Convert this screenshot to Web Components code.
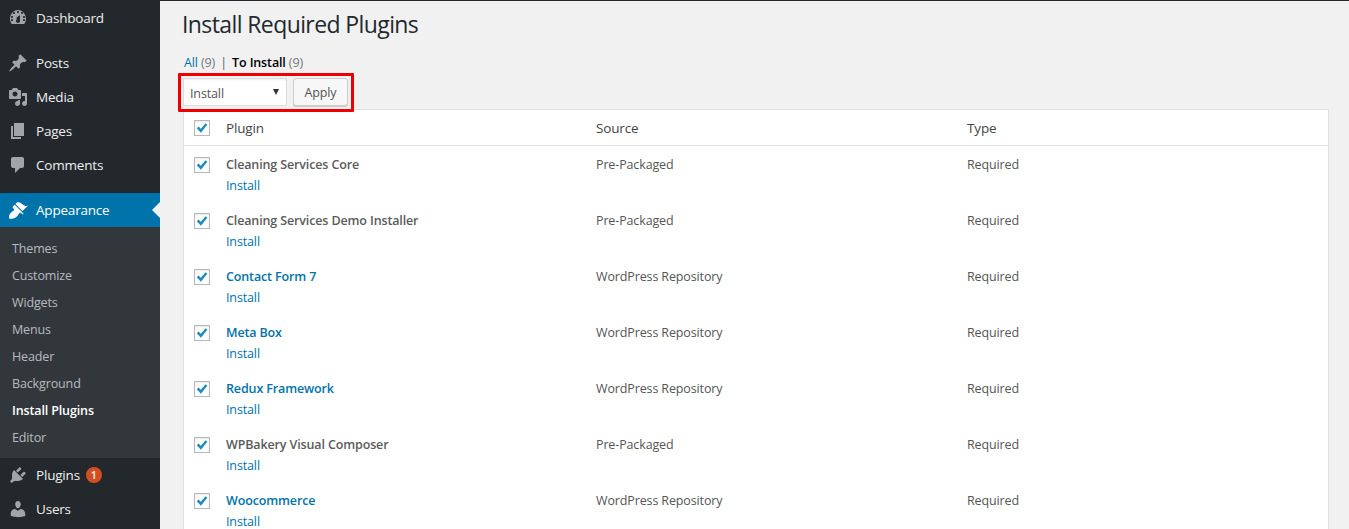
<!DOCTYPE html>
<html>
<head>
<meta charset="utf-8">
<title>Install Required Plugins</title>
<style>
    html, body { margin: 0; height: 529px; overflow: hidden; background: #f1f1f1; }
    body { font-family: "Open Sans", "Noto Sans", sans-serif; font-size: 12.5px; letter-spacing: -.13px; color: #444; }
    wp-shell { height: 529px; }
</style>
</head>
<body>
<wp-shell>
    <wp-sidebar slot="side"></wp-sidebar>
    <wp-plugins-page></wp-plugins-page>
</wp-shell>

<script>
const ICONS = {
    dashboard: '<path fill-rule="evenodd" d="M3.76 16h12.48c1.100-1.430 1.760-3.210 1.760-5.140 0-4.670-3.580-8.860-8-8.860s-8 4.190-8 8.860c0 1.930.66 3.710 1.760 5.140zM10 3c.55 0 1 .45 1 1s-.45 1-1 1-1-.45-1-1 .45-1 1-1zM6 4c.55 0 1 .45 1 1s-.45 1-1 1-1-.45-1-1 .45-1 1-1zm8 0c.55 0 1 .45 1 1s-.45 1-1 1-1-.45-1-1 .45-1 1-1zm-5.370 5.550L12 7v6c0 1.100-.9 2-2 2s-2-.9-2-2c0-.57.24-1.080.63-1.450zM4 8c.55 0 1 .45 1 1s-.45 1-1 1-1-.45-1-1 .45-1 1-1zm12 0c.55 0 1 .45 1 1s-.45 1-1 1-1-.45-1-1 .45-1 1-1zm-12 3c.55 0 1 .45 1 1s-.45 1-1 1-1-.45-1-1 .45-1 1-1zm12 0c.55 0 1 .45 1 1s-.45 1-1 1-1-.45-1-1 .45-1 1-1z"/>',
    posts: '<path d="M10.440 3.020l1.820-1.820 6.360 6.350-1.830 1.820c-1.050-.68-2.480-.57-3.410.36l-.75.75c-.92.93-1.040 2.350-.35 3.410l-1.830 1.820-2.410-2.410-2.800 2.790c-.42.42-3.380 2.710-3.800 2.290s1.860-3.390 2.280-3.810l2.790-2.790L4.100 9.360l1.830-1.820c1.050.69 2.480.57 3.400-.36l.75-.75c.93-.92 1.050-2.350.36-3.410z"/>',
    media: '<path fill-rule="evenodd" d="M13 11V4c0-.55-.45-1-1-1h-1.670L9 1H5L3.670 3H2c-.55 0-1 .45-1 1v7c0 .55.45 1 1 1h10c.55 0 1-.45 1-1zM7 4.500c1.380 0 2.500 1.120 2.500 2.500S8.380 9.500 7 9.500 4.500 8.380 4.500 7 5.620 4.500 7 4.500z"/><path d="M14 6h5v10.500c0 1.380-1.120 2.500-2.500 2.500S14 17.880 14 16.500s1.120-2.500 2.500-2.500c.17 0 .34.020.5.050V9h-3V6zm-4 8.050V13h2v3.500c0 1.380-1.120 2.500-2.500 2.500S7 17.880 7 16.500 8.120 14 9.500 14c.17 0 .34.020.5.050z"/>',
    pages: '<path d="M6 15V2h10v13H6zm-1 1h8v2H3V5h2v11z"/>',
    comments: '<path d="M5 2h9c1.100 0 2 .9 2 2v7c0 1.100-.9 2-2 2h-2l-5 5v-5H5c-1.100 0-2-.9-2-2V4c0-1.100.9-2 2-2z"/>',
    appearance: '<path d="M14.480 11.060L7.410 3.990l1.500-1.500c.5-.56 2.300-.47 3.510.32 1.210.8 1.430 1.280 2.910 2.100 1.180.64 2.450 1.260 4.450.85zm-.71.71L6.700 4.700 4.930 6.470c-.39.39-.39 1.020 0 1.410l1.060 1.060c.39.39.39 1.030 0 1.420-.6.6-1.430 1.110-2.210 1.690-.35.26-.7.53-1.010.84C1.430 13.230.91 15.950 1.200 18.800c2.850.29 5.570-.23 7.910-2.570.31-.31.58-.66.84-1.010.58-.78 1.090-1.610 1.690-2.210.39-.39 1.020-.39 1.410 0l1.060 1.060c.39.39 1.020.39 1.410 0z"/>',
    plugins: '<path d="M13.110 4.360L9.870 7.600 8 5.730l3.240-3.240c.35-.34 1.050-.2 1.560.32.52.51.66 1.210.31 1.550zm-8 1.770l.91-1.120 9.010 9.010-1.190.84c-.71.71-2.630 1.160-3.820 1.160H6.140L4.900 17.260c-.59.59-1.540.59-2.120 0-.59-.58-.59-1.530 0-2.120l1.240-1.240v-3.880c0-1.130.4-3.050 1.110-3.760zm7.260 3.970l3.240-3.240c.34-.35 1.040-.21 1.550.31.52.51.66 1.210.31 1.550l-3.240 3.250z"/>',
    users: '<path d="M10 9.250c-2.270 0-2.730-3.440-2.730-3.440C7 4.020 7.820 2 9.970 2c2.160 0 2.980 2.020 2.710 3.810 0 0-.41 3.440-2.680 3.440zm0 2.570L12.720 10c2.390 0 4.520 2.330 4.520 4.530v2.490s-3.650 1.130-7.240 1.130c-3.650 0-7.240-1.130-7.240-1.130v-2.490c0-2.250 1.940-4.480 4.150-4.480z"/>'
};

class WpMenuItem extends HTMLElement {
    constructor() {
        super();
        this.attachShadow({ mode: 'open' });
        const icon = ICONS[this.getAttribute('icon')] || '';
        const current = this.hasAttribute('current');
        this.shadowRoot.innerHTML = `
            <style>
                :host { display: block; }
                .item {
                    display: flex; align-items: center; height: 34px;
                    color: ${current ? '#fff' : '#eee'};
                    background: ${current ? '#0073aa' : 'transparent'};
                    position: relative;
                    font-size: 13.5px;
                    letter-spacing: -.2px;
                }
                svg { width: 20px; height: 20px; margin-left: 8px; margin-right: 8px; fill: ${current ? '#fff' : '#a0a5aa'}; flex: none; }
                .label { display: flex; align-items: center; }
                .arrow {
                    position: absolute; right: 0; top: 9px; width: 0; height: 0;
                    border: 8px solid transparent; border-right-color: #f1f1f1; border-left: 0;
                }
            </style>
            <div class="item">
                <svg viewBox="0 0 20 20">${icon}</svg>
                <span class="label"><slot></slot></span>
                ${current ? '<span class="arrow"></span>' : ''}
            </div>`;
    }
}
customElements.define('wp-menu-item', WpMenuItem);

class WpSubmenu extends HTMLElement {
    constructor() {
        super();
        this.attachShadow({ mode: 'open' });
        this.shadowRoot.innerHTML = `
            <style>
                :host { display: block; background: #32373c; padding: 8px 0 7px; }
                ::slotted(a) {
                    display: block; height: 27px; line-height: 27px; padding-left: 12px;
                    color: rgba(240,245,250,.7);
                }
                ::slotted(a.on) { color: #fff; font-weight: 600; }
            </style>
            <slot></slot>`;
    }
}
customElements.define('wp-submenu', WpSubmenu);

class WpBadge extends HTMLElement {
    constructor() {
        super();
        this.attachShadow({ mode: 'open' });
        this.shadowRoot.innerHTML = `
            <style>
                :host {
                    display: inline-block; width: 16px; height: 16px; border-radius: 50%;
                    background: #d54e21; color: #fff; font-size: 10px; line-height: 16px;
                    text-align: center; font-weight: 600; margin-left: 6px; letter-spacing: 0;
                }
            </style>
            <slot></slot>`;
    }
}
customElements.define('wp-badge', WpBadge);

class WpSidebar extends HTMLElement {
    constructor() {
        super();
        this.attachShadow({ mode: 'open' });
        this.shadowRoot.innerHTML = `
            <style>
                :host { display: block; width: 160px; flex: none; background: #23282d; height: 529px; overflow: hidden; }
                .group { margin-bottom: 11px; }
                .sep-first { margin-top: 1px; margin-bottom: 11px; }
            </style>
            <div class="sep-first"><wp-menu-item icon="dashboard">Dashboard</wp-menu-item></div>
            <div class="group">
                <wp-menu-item icon="posts">Posts</wp-menu-item>
                <wp-menu-item icon="media">Media</wp-menu-item>
                <wp-menu-item icon="pages">Pages</wp-menu-item>
                <wp-menu-item icon="comments">Comments</wp-menu-item>
            </div>
            <wp-menu-item icon="appearance" current>Appearance</wp-menu-item>
            <wp-submenu>
                <a>Themes</a><a>Customize</a><a>Widgets</a><a>Menus</a><a>Header</a><a>Background</a><a class="on">Install Plugins</a><a>Editor</a>
            </wp-submenu>
            <wp-menu-item icon="plugins">Plugins<wp-badge>1</wp-badge></wp-menu-item>
            <wp-menu-item icon="users">Users</wp-menu-item>`;
    }
}
customElements.define('wp-sidebar', WpSidebar);

class WpCheck extends HTMLElement {
    constructor() {
        super();
        this.attachShadow({ mode: 'open' });
        this.shadowRoot.innerHTML = `
            <style>
                :host { display: block; width: 16px; height: 16px; box-sizing: border-box; border: 1px solid #b4b9be; background: #fff; box-shadow: inset 0 1px 2px rgba(0,0,0,.1); }
                svg { display: block; width: 14px; height: 14px; fill: #1e8cbe; }
            </style>
            <svg viewBox="0 0 14 14"><path d="M1.800 7.200l1.700-1.700 2.300 2.200 4.800-5.400 1.700 1.500-6.400 8z"/></svg>`;
    }
}
customElements.define('wp-check', WpCheck);

class WpPluginRow extends HTMLElement {
    constructor() {
        super();
        this.attachShadow({ mode: 'open' });
        const name = this.getAttribute('name');
        const linked = this.hasAttribute('linked');
        this.shadowRoot.innerHTML = `
            <style>
                :host { display: grid; grid-template-columns: 42px 370px 371px 1fr; height: 56px; box-sizing: border-box; padding-top: 8px; }
                wp-check { margin: 3px 0 0 10px; }
                .name { line-height: 21px; font-weight: 600; color: ${linked ? '#0073aa' : '#5b5b5b'}; }
                .act { line-height: 21px; color: #0073aa; }
                .cell { line-height: 21px; color: #555; }
            </style>
            <wp-check></wp-check>
            <div><div class="name">${name}</div><div class="act">Install</div></div>
            <div class="cell">${this.getAttribute('source')}</div>
            <div class="cell">Required</div>`;
    }
}
customElements.define('wp-plugin-row', WpPluginRow);

class WpPluginsTable extends HTMLElement {
    constructor() {
        super();
        this.attachShadow({ mode: 'open' });
        this.shadowRoot.innerHTML = `
            <style>
                :host { display: block; background: #fff; border: 1px solid #e1e1e1; border-bottom: 0; box-sizing: border-box; }
                .head { display: grid; grid-template-columns: 42px 370px 371px 1fr; height: 35px; align-items: center; border-bottom: 1px solid #e1e1e1; font-size: 13.5px; letter-spacing: -.15px; color: #444; }
                wp-check { margin-left: 10px; margin-top: 1px; }
            </style>
            <div class="head"><wp-check></wp-check><div>Plugin</div><div>Source</div><div>Type</div></div>
            <slot></slot>`;
    }
}
customElements.define('wp-plugins-table', WpPluginsTable);

class WpPluginsPage extends HTMLElement {
    constructor() {
        super();
        this.attachShadow({ mode: 'open' });
        const rows = [
            ['Cleaning Services Core', 'Pre-Packaged', false],
            ['Cleaning Services Demo Installer', 'Pre-Packaged', false],
            ['Contact Form 7', 'WordPress Repository', true],
            ['Meta Box', 'WordPress Repository', true],
            ['Redux Framework', 'WordPress Repository', true],
            ['WPBakery Visual Composer', 'Pre-Packaged', false],
            ['Woocommerce', 'WordPress Repository', true]
        ];
        this.shadowRoot.innerHTML = `
            <style>
                :host { display: block; flex: 1; min-width: 0; padding: 0 20px 0 23px; overflow: hidden; height: 529px; }
                h1 { margin: 0 0 0 -1px; font-size: 23px; font-weight: 400; line-height: 29px; letter-spacing: -.6px; color: #23282d; padding-top: 10px; }
                .views { margin-top: 15px; padding-left: 1px; line-height: 18px; color: #72777c; height: 18px; }
                .views a { color: #0073aa; }
                .views b { color: #000; font-weight: 600; }
                .views i { font-style: normal; color: #555d66; margin: 0 2px; }
                .actions { position: relative; display: flex; gap: 6px; margin-top: 6px; height: 31px; align-items: flex-start; }
                .hl { position: absolute; left: -5px; top: -5px; width: 176px; height: 39px; border: 3px solid #ee0000; border-radius: 1px; box-sizing: border-box; pointer-events: none; }
                .select { width: 104px; height: 28px; box-sizing: border-box; border: 1px solid #ddd; background: #fff; color: #555; padding-left: 6px; line-height: 29px; position: relative; box-shadow: inset 0 1px 2px rgba(0,0,0,.07); }
                .select::after { content: ""; position: absolute; right: 7px; top: 10px; border: 3px solid transparent; border-top: 6px solid #333; border-bottom: 0; }
                .apply { height: 28px; width: 55px; box-sizing: border-box; border: 1px solid #ccc; border-radius: 3px; background: #f7f7f7; color: #555; text-align: center; line-height: 28px; box-shadow: 0 1px 0 #ccc; }
            </style>
            <h1>Install Required Plugins</h1>
            <div class="views"><a>All</a> (9) <i>|</i> <b>To Install</b> (9)</div>
            <div class="actions">
                <div class="select">Install</div>
                <div class="apply">Apply</div>
                <div class="hl"></div>
            </div>
            <wp-plugins-table>
                ${rows.map(r => `<wp-plugin-row name="${r[0]}" source="${r[1]}" ${r[2] ? 'linked' : ''}></wp-plugin-row>`).join('')}
            </wp-plugins-table>`;
    }
}
customElements.define('wp-plugins-page', WpPluginsPage);

class WpShell extends HTMLElement {
    constructor() {
        super();
        this.attachShadow({ mode: 'open' });
        this.shadowRoot.innerHTML = `
            <style>
                :host { display: flex; width: 1349px; }
                .top { position: absolute; left: 0; top: 0; right: 0; height: 1px; background: #23282d; }
            </style>
            <slot name="side"></slot><slot></slot><div class="top"></div>`;
    }
}
customElements.define('wp-shell', WpShell);
</script>
</body>
</html>
